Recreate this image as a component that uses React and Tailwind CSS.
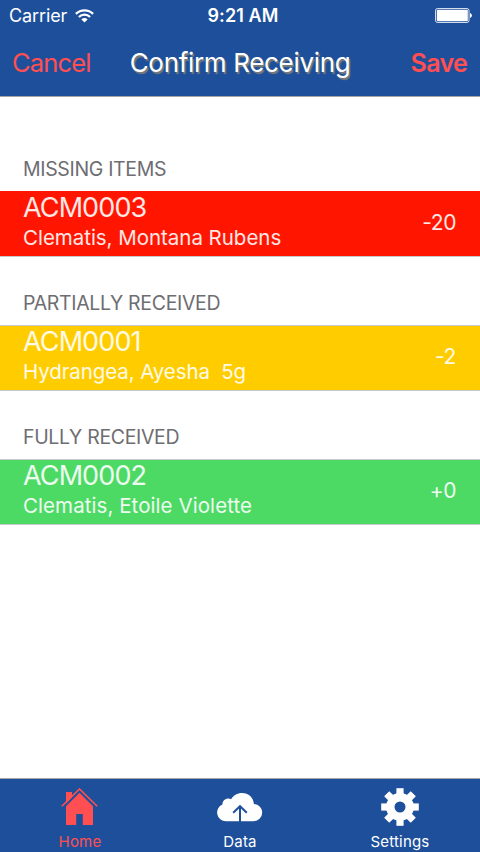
const sections = [
    {
        title: 'MISSING ITEMS',
        code: 'ACM0003',
        name: 'Clematis, Montana Rubens',
        diff: '-20',
        section: 'h-[94px]',
        row: 'h-[65px] bg-[#ff1500]',
        nameSpacing: 'tracking-[-0.03px]',
    },
    {
        title: 'PARTIALLY RECEIVED',
        code: 'ACM0001',
        name: 'Hydrangea, Ayesha  5g',
        diff: '-2',
        section: 'h-[69px] border-b border-[#c8c7cc]',
        row: 'h-[64px] bg-[#ffcc00]',
        nameSpacing: 'tracking-[-0.1px]',
    },
    {
        title: 'FULLY RECEIVED',
        code: 'ACM0002',
        name: 'Clematis, Etoile Violette',
        diff: '+0',
        section: 'h-[69px] border-b border-[#c8c7cc]',
        row: 'h-[64px] bg-[#4cd964]',
        nameSpacing: 'tracking-[0.07px]',
    },
]

const WifiIcon = () => (
    <svg width="19" height="14" viewBox="0 0 19 14" fill="none" stroke="white" strokeWidth="2.2">
        <path d="M0.9 4.9a12.2 12.2 0 0 1 17.2 0" />
        <path d="M3.9 8a7.9 7.9 0 0 1 11.2 0" />
        <path d="M9.5 13.6 6.4 10.4a4.4 4.4 0 0 1 6.2 0Z" fill="white" stroke="none" />
    </svg>
)

const BatteryIcon = () => (
    <svg width="38" height="15" viewBox="0 0 38 15">
        <rect x="0.5" y="0.5" width="33.5" height="14" rx="2" fill="none" stroke="white" strokeOpacity="0.8" />
        <rect x="1.8" y="1.8" width="31" height="11.4" rx="0.8" fill="white" />
        <path d="M35 5a2.6 2.6 0 0 1 0 5Z" fill="white" />
    </svg>
)

const HomeIcon = () => (
    <svg width="38" height="38" viewBox="0 0 38 38" fill="#ff4f52">
        <path d="M5 4h6v5.5L5 15.5Z" />
        <path d="M0.8 18.3 18.5 1l17.7 17.3" fill="none" stroke="#ff4f52" strokeWidth="1.6" />
        <path d="M18.5 4.8 32 18.2V37H21.8V26h-6.6V37H5V18.2Z" />
    </svg>
)

const CloudIcon = () => (
    <svg width="46" height="38" viewBox="0 0 46 38">
        <path
            d="M8.8 33.2A8.7 8.7 0 0 1 5.4 16.5C5.4 11.8 10 9.4 14.2 11.2 16.2 7.5 20.3 5 25 5c6.5 0 11.5 4.7 11.9 10.9 4.8.3 8.3 4 8.3 8.5a8.8 8.8 0 0 1-9 8.8Z"
            fill="white"
        />
        <path d="M23 34V18.5M16.2 24.8l6.8-6.6 6.8 6.6" fill="none" stroke="#1e4f9b" strokeWidth="2" />
    </svg>
)

const GearIcon = () => (
    <svg width="38" height="38" viewBox="-19 -19 38 38">
        <circle r="9.7" fill="none" stroke="white" strokeWidth="8.4" />
        <g fill="white">
            {[0, 45, 90, 135].map((angle) => (
                <g key={angle} transform={`rotate(${angle})`}>
                    <rect x="-3.6" y="-18.8" width="7.2" height="7" />
                    <rect x="-3.6" y="11.8" width="7.2" height="7" />
                </g>
            ))}
        </g>
    </svg>
)

const Tab = ({ icon, label, color }) => (
    <div className={`flex w-1/3 flex-col items-center pt-[9px] ${color}`}>
        {icon}
        <span className="mt-[7px] text-[15px] leading-[18px] tracking-[0.2px]">{label}</span>
    </div>
)

const App = () => {
    return (
        <div className="flex h-[852px] w-[480px] flex-col overflow-hidden bg-white font-['Inter',sans-serif]">
            {/* Status bar and navigation */}
            <header className="h-[97px] shrink-0 border-b border-[#a3a5a8] bg-[#1e4f9b] text-white">
                <div className="grid h-[30px] grid-cols-[1fr_auto_1fr] items-center pr-[7px] pl-[9px] pt-px">
                    <div className="flex items-center gap-2">
                        <span className="text-[18px] tracking-[-0.1px]">Carrier</span>
                        <WifiIcon />
                    </div>
                    <span className="pl-1 text-center text-[18px] font-semibold tracking-[0.1px]">9:21 AM</span>
                    <div className="flex justify-end">
                        <BatteryIcon />
                    </div>
                </div>
                <div className="grid h-[66px] grid-cols-[1fr_auto_1fr] items-center px-[12px] text-[25.5px] text-[#ff4f52]">
                    <button className="justify-self-start pt-px tracking-[-0.85px]">Cancel</button>
                    <h1 className="pb-0.5 text-[26px] tracking-[-0.33px] text-white [text-shadow:1.5px_1.5px_1px_#7d7d78]">
                        Confirm Receiving
                    </h1>
                    <button className="justify-self-end pt-0.5 pr-px text-[25px] font-semibold tracking-[-0.7px]">Save</button>
                </div>
            </header>

            {/* Received items */}
            <main className="flex-1">
                {sections.map((s) => (
                    <section key={s.code}>
                        <h2 className={`flex items-end px-[23px] pb-[10px] text-[19.5px] leading-6 tracking-[-0.33px] text-[#6d6d72] ${s.section}`}>
                            {s.title}
                        </h2>
                        <div className={`box-content flex items-center justify-between border-b border-[#c8c7cc] pr-6 pl-[23px] text-white/90 ${s.row}`}>
                            <div className="pb-1">
                                <p className="text-[27px] leading-[32px] tracking-[-0.9px]">{s.code}</p>
                                <p className={`text-[20.5px] leading-[28px] whitespace-pre ${s.nameSpacing}`}>{s.name}</p>
                            </div>
                            <span className="pb-0.5 text-[21px] tracking-[-0.4px]">{s.diff}</span>
                        </div>
                    </section>
                ))}
            </main>

            <nav className="flex h-[74px] shrink-0 border-t border-[#a3a5a8] bg-[#1e4f9b]">
                <Tab icon={<HomeIcon />} label="Home" color="text-[#ff4f52]" />
                <Tab icon={<CloudIcon />} label="Data" color="text-white" />
                <Tab icon={<GearIcon />} label="Settings" color="text-white" />
            </nav>
        </div>
    )
}

export default App
